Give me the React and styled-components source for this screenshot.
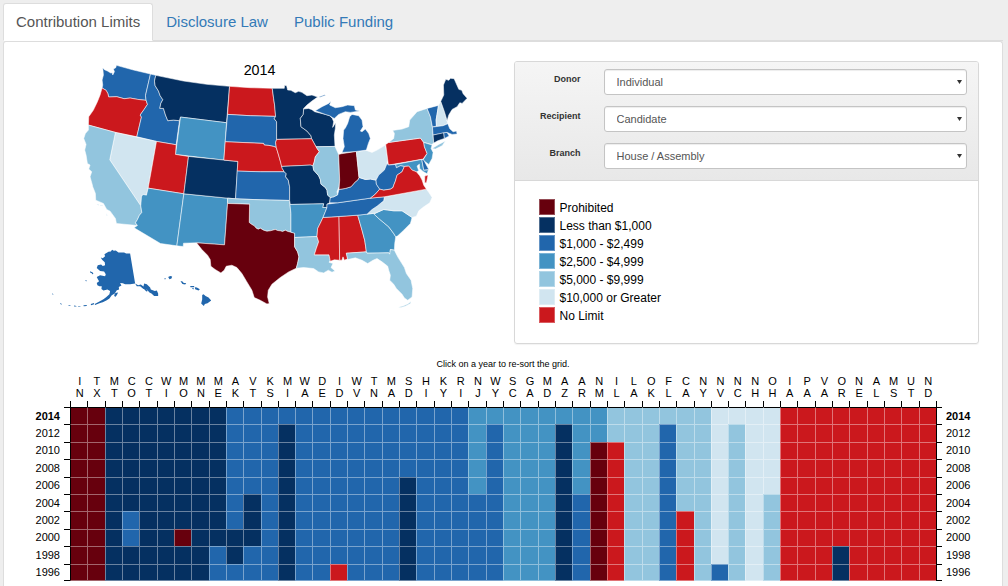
import React, { useState } from "react";
import styled, { createGlobalStyle } from "styled-components";

const GlobalStyle = createGlobalStyle`
  *, *::before, *::after { box-sizing: border-box; }
  body {
    margin: 0;
    background: #eee;
    color: #000;
    font-family: "Liberation Sans", Arial, sans-serif;
  }
`;

const LEVELS = {
  P: { color: "#67000d", label: "Prohibited" },
  A: { color: "#053061", label: "Less than $1,000" },
  B: { color: "#2166ac", label: "$1,000 - $2,499" },
  C: { color: "#4393c3", label: "$2,500 - $4,999" },
  D: { color: "#92c5de", label: "$5,000 - $9,999" },
  E: { color: "#d1e5f0", label: "$10,000 or Greater" },
  N: { color: "#cb181d", label: "No Limit" },
};

const YEARS = [2014, 2012, 2010, 2008, 2006, 2004, 2002, 2000, 1998, 1996];

// One letter per year, newest first; a single letter means it never changed.
const LIMITS = {
  IN: "P", TX: "P", MT: "A", CO: "AAAAAABBAA", CT: "A", WI: "A",
  MO: "AAAAAAAPAA", MN: "A", ME: "AAAAAAAABB", AK: "BBBBBBBAAB",
  VT: "BBBBBAAABB", KS: "B", MI: "BAAAAAAAAA", WA: "B", DE: "B",
  ID: "BBBBBBBBBN", WV: "B", TN: "B", MA: "B", SD: "BBBBAAAAAA",
  HI: "B", KY: "B", RI: "B", NJ: "CCCCCBBBBB", WY: "CBBBBBBBBB",
  SC: "C", GA: "C", MD: "C", AZ: "CAAAAAAAAA", AR: "CCCCCBBBBB",
  NM: "CCPPPPPPPP", IL: "DDNNNNNNNN", LA: "D", OK: "D",
  FL: "DBBBBBBBBB", CA: "DDDDDDNNNN", NY: "D", NV: "EEEEEEEEEB",
  NC: "EDDDDDDDDD", NH: "E", OH: "EEEEEDDDDD", IA: "N", PA: "N",
  VA: "N", OR: "NNNNNNNNAA", NE: "N", AL: "N", MS: "N", UT: "N", ND: "N",
};

const STATES = Object.keys(LIMITS);
const levelOf = (state, row) => LIMITS[state][row] || LIMITS[state][0];

const SHAPES = {
  WA: "M308,203 313,209 322,213 332,219 336,218 338,225 343,215 340,207 347,203 349,196 400,210 451,222 436,287 438,301 412,298 390,294 372,296 350,290 326,291 323,280 318,271 306,264 308,255 306,240 310,225Z",
  OR: "M306,264 318,271 323,280 326,291 350,290 372,296 390,294 412,298 438,301 442,313 432,328 420,345 424,351 410,410 346,397 265,375 266,350 280,330 292,305 300,285Z",
  ID: "M451,222 467,226 463,243 465,257 475,273 480,287 488,299 482,310 479,325 490,325 496,345 503,362 520,360 538,362 528,434 469,424 410,410 424,351 420,345 432,328 442,313 438,301 436,287Z",
  MT: "M467,226 550,243 620,253 688,259 679,368 541,351 538,362 520,360 503,362 496,345 490,325 479,325 482,310 488,299 480,287 475,273 465,257 463,243Z",
  WY: "M541,351 679,368 671,480 526,463Z",
  NV: "M346,397 469,424 444,564 439,585 428,583 424,590 422,617 329,479Z",
  UT: "M469,424 528,434 526,463 565,469 551,581 444,564Z",
  CA: "M265,375 346,397 329,479 422,617 425,637 418,645 412,658 406,668 412,676 349,670 346,655 330,633 320,628 310,610 287,600 286,580 278,560 277,555 270,530 275,515 266,507 270,495 262,490 258,465 254,450 258,433 251,415 256,400 265,390Z M290,612l6,1 1,2 -6,-1Z M300,615l8,0 0,2 -8,0Z M318,640l4,5 -2,1Z",
  AZ: "M444,564 551,581 530,737 481,730 402,683 412,676 406,668 412,658 418,645 425,637 422,617 424,590 428,583 439,585Z",
  NM: "M551,581 682,594 682,610 673,734 589,728 550,729 549,739 530,737Z",
  CO: "M565,469 671,480 713,484 706,596 682,594 551,581Z",
  ND: "M688,259 750,263 816,265 820,295 823,315 826,349 750,347 682,343Z",
  SD: "M682,343 750,347 826,349 822,356 829,365 829,418 826,427 828,442 820,439 806,436 792,435 790,430 675,425Z",
  NE: "M675,425 790,430 792,435 806,436 820,439 828,442 835,465 841,486 846,505 852,515 780,515 711,513 713,484 671,480Z",
  KS: "M711,513 780,515 852,515 858,521 856,530 864,540 868,560 868,601 780,599 706,596Z",
  OK: "M682,594 706,596 780,599 868,601 869,612 872,640 872,696 863,694 855,690 847,694 840,692 832,691 825,688 810,692 800,693 790,690 780,684 774,687 768,684 762,677 755,673 747,667 748,612 682,610Z",
  TX: "M682,610 748,612 747,667 755,673 762,677 768,684 774,687 780,684 790,690 800,693 810,692 825,688 832,691 840,692 847,694 855,690 863,694 872,696 883,699 883,740 892,755 896,770 892,790 888,804 865,815 840,832 815,852 804,870 802,890 807,910 800,911 780,900 762,892 755,870 740,845 725,820 710,802 695,795 678,798 672,810 662,818 645,808 632,798 630,778 622,765 605,748 589,728 673,734Z",
  MN: "M816,265 852,265 853,256 859,257 862,270 872,271 885,278 895,274 905,277 920,287 935,285 952,291 935,303 920,315 910,325 909,343 900,355 902,380 920,393 932,407 934,416 829,418 829,365 822,356 826,349 823,315 820,295Z",
  WI: "M910,327 925,325 935,329 943,335 975,343 988,347 996,355 1000,365 997,382 1006,368 1005,385 1002,405 1004,439 947,440 940,427 934,416 932,407 920,393 902,380 900,355 909,343Z",
  IA: "M829,418 934,416 940,427 947,440 957,455 945,470 942,485 938,497 930,495 844,499 841,486 835,465 828,442 826,427Z",
  MO: "M844,499 930,495 938,497 940,510 955,527 960,538 962,552 975,562 980,570 982,585 990,592 988,608 980,612 980,622 967,622 970,611 870,613 868,601 868,560 864,540 856,530 858,521 852,515 846,505Z",
  AR: "M869,613 970,611 967,622 980,622 975,635 968,652 962,665 952,685 950,709 883,712 883,699 872,696 872,640Z",
  LA: "M883,712 950,709 955,725 948,745 942,764 986,764 990,780 986,786 998,790 992,802 1004,812 995,816 984,810 970,818 955,815 940,805 910,802 888,804 892,790 896,770 892,755 883,740Z",
  MS: "M968,652 1016,649 1018,780 1002,779 990,783 986,764 942,764 948,745 955,725 950,709 952,685 962,665Z",
  AL: "M1016,649 1072,645 1085,690 1093,720 1096,740 1098,755 1038,759 1042,776 1032,780 1028,770 1025,780 1018,780Z",
  GA: "M1072,645 1125,639 1122,643 1135,655 1165,680 1180,700 1186,710 1183,730 1182,750 1170,748 1168,762 1165,758 1100,759 1098,755 1096,740 1093,720 1085,690Z",
  FL: "M1038,759 1098,755 1100,759 1165,758 1168,762 1170,748 1182,750 1192,770 1212,802 1218,820 1232,840 1237,865 1235,890 1222,900 1212,893 1205,882 1188,865 1180,852 1168,840 1170,825 1165,810 1162,798 1145,785 1130,775 1118,780 1102,790 1085,780 1065,773 1042,778Z M1194,921l14,-4 14,-6 10,-7 -2,6 -14,7 -14,5Z",
  SC: "M1125,639 1150,628 1180,632 1205,632 1235,652 1230,670 1210,690 1192,707 1186,710 1180,700 1165,680 1135,655 1122,643Z",
  NC: "M1100,642 1115,628 1130,618 1150,602 1152,590 1278,567 1286,578 1295,592 1288,608 1270,620 1255,632 1248,648 1235,652 1205,632 1180,632 1150,628 1125,639Z",
  TN: "M980,612 1012,608 1110,594 1152,590 1150,602 1130,618 1115,628 1100,642 1072,645 1016,649 968,652 975,635 980,622Z",
  KY: "M988,608 990,592 1000,590 1012,584 1016,568 1035,565 1052,560 1065,545 1072,540 1076,532 1095,538 1110,537 1127,540 1128,552 1138,567 1125,582 1110,594 1012,608Z",
  IL: "M947,440 1004,439 1015,463 1018,540 1016,560 1010,575 1012,584 1000,590 990,592 982,585 980,570 975,562 962,552 960,538 955,527 940,510 938,497 942,485 945,470 957,455Z",
  IN: "M1015,463 1023,461 1068,454 1076,532 1072,540 1065,545 1052,560 1035,565 1016,568 1018,540Z",
  OH: "M1068,454 1098,451 1115,457 1130,450 1155,435 1162,475 1160,492 1152,510 1135,525 1127,540 1110,537 1095,538 1076,532Z",
  MI: "M1025,457 1032,440 1028,415 1030,390 1035,384 1042,370 1048,350 1055,343 1075,347 1085,360 1088,380 1080,393 1085,395 1095,387 1105,400 1110,415 1104,430 1098,450 1068,454Z M945,332 965,320 985,310 992,303 988,315 1005,323 1025,320 1042,315 1062,317 1065,330 1078,333 1050,337 1035,335 1015,343 1002,355 996,352 988,347 975,343Z M955,291l18,-7 3,2 -16,6Z",
  PA: "M1156,433 1165,427 1260,414 1270,427 1272,440 1280,460 1268,477 1164,495Z",
  NY: "M1165,427 1180,415 1182,400 1177,391 1205,387 1225,380 1228,360 1250,335 1280,325 1290,350 1296,381 1298,405 1300,429 1294,433 1270,427 1260,414Z M1295,445 1315,433 1335,423 1325,437 1305,447Z",
  NJ: "M1270,427 1295,435 1292,445 1298,457 1295,475 1285,493 1268,480 1280,460 1272,440Z",
  MD: "M1185,493 1264,478 1270,510 1284,509 1280,521 1268,514 1258,505 1257,492 1250,498 1255,512 1248,515 1235,510 1225,498 1212,499 1200,497 1188,503Z",
  DE: "M1264,478 1270,480 1285,508 1270,510Z",
  WV: "M1160,490 1164,495 1185,493 1188,503 1200,497 1212,499 1205,515 1190,525 1185,543 1180,555 1178,562 1170,567 1150,570 1138,567 1128,552 1127,540 1135,525 1152,510Z",
  VA: "M1212,499 1225,498 1235,510 1248,515 1258,527 1265,540 1270,555 1278,567 1152,590 1110,594 1125,582 1138,567 1150,570 1170,567 1178,562 1180,555 1185,543 1190,525 1205,515Z M1273,528 1283,525 1278,548 1273,548Z",
  VT: "M1280,325 1314,316 1312,330 1307,360 1308,378 1296,381 1290,350Z",
  NH: "M1314,316 1321,304 1332,335 1342,370 1328,377 1308,379 1307,360 1312,330Z",
  ME: "M1321,304 1330,285 1329,255 1336,238 1345,241 1350,235 1361,236 1375,268 1384,271 1388,281 1400,295 1385,310 1378,308 1370,320 1355,328 1345,345 1340,362 1332,335Z",
  MA: "M1296,381 1328,377 1342,371 1348,386 1358,395 1368,393 1370,402 1355,403 1340,397 1298,405Z",
  CT: "M1298,405 1330,398 1332,415 1312,422 1300,429Z",
  RI: "M1330,398 1340,397 1346,408 1332,415Z",
  AK: "M302,772 308,774 315,768 313,762 325,755 332,754 336,749 341,752 347,751 355,757 372,757 378,760 390,760 405,850 390,852 375,852 368,849 360,848 364,856 356,860 357,868 350,870 344,880 335,885 328,895 320,900 308,906 300,908 285,914 284,911 298,904 310,897 318,891 328,882 330,872 322,868 310,871 304,866 305,858 298,858 292,855 290,848 297,843 293,836 290,830 300,825 315,828 317,822 312,814 300,812 295,808 290,803 293,795 303,793 308,797 315,795 314,786 306,779Z M405,850 414,855 422,853 430,859 432,850 440,852 450,862 452,868 464,872 470,871 474,880 474,887 462,887 454,880 448,877 440,868 430,866 420,858 410,858Z M433,862l10,10 -4,2 -8,-8Z M342,885 346,878 354,877 350,885 345,890Z M270,813l8,4 2,4 -3,1 -2,-3 -5,-2Z M272,911l10,-3 0,4 -9,3Z M250,915l10,-1 0,3 -9,1Z M234,917l7,0 0,2 -7,0Z M222,916l7,1 0,2 -7,0Z M205,914l6,1 0,2 -6,-1Z M180,909l6,2 0,2 -6,-2Z M156,880l4,1 0,2 -4,-1Z M256,840l4,1 0,2 -4,-1Z",
  HI: "M504,830 510,827 516,829 514,835 508,837Z M493,834l4,0 -1,3 -3,0Z M541,843 546,843 551,848 558,848 555,853 547,851Z M570,857l12,0 0,4 -11,0Z M576,864l5,0 0,3 -5,-1Z M584,861l6,1 9,5 -4,4 -10,-4Z M606,884 610,882 616,887 625,892 633,901 622,909 614,911 611,917 603,910 606,898Z",
};

// Island chains are too fine to carry an outline.
const ISLAND_STATES = ["AK", "HI"];

const Page = styled.div`
  display: flex;
  flex-direction: column;
  min-height: 100vh;
  padding: 3px 5px 0 3px;
`;

const Tabs = styled.nav`
  display: flex;
  border-bottom: 1px solid #ddd;
`;

const Tab = styled.a`
  margin-bottom: -1px;
  padding: 8px 12px 9px;
  border: 1px solid ${(p) => (p.$active ? "#ddd" : "transparent")};
  border-bottom-color: ${(p) => (p.$active ? "#fff" : "transparent")};
  border-radius: 3px 3px 0 0;
  background: ${(p) => (p.$active ? "#fff" : "transparent")};
  color: ${(p) => (p.$active ? "#555" : "#337ab7")};
  font-size: 15px;
  line-height: 19px;
  text-decoration: none;
`;

const Panel = styled.main`
  flex: 1;
  padding-bottom: 4px;
  border: 1px solid #ddd;
  border-bottom: 0;
  border-radius: 3px 3px 0 0;
  background: #fff;
`;

const Overview = styled.section`
  display: grid;
  grid-template-columns: minmax(0, 1fr) minmax(0, 1fr);
  gap: 20px;
  align-items: start;
  padding: 19px 23px 0 24px;
`;

const MapDrawing = styled.svg`
  display: block;
  width: 100%;
  height: auto;

  text {
    font-size: 43px;
    text-anchor: middle;
  }
`;

const StateShape = styled.path`
  stroke: ${(p) => (p.$outlined ? "rgba(255, 255, 255, 0.8)" : "none")};
  stroke-width: 2px;
  stroke-linejoin: round;
`;

const Card = styled.div`
  overflow: hidden;
  border: 1px solid #d8d8d8;
  border-radius: 3px;
  box-shadow: 0 1px 1px rgba(0, 0, 0, 0.05);
`;

const Filters = styled.form`
  display: grid;
  gap: 11px;
  padding: 7px 11px 11px 0;
  border-bottom: 1px solid #d8d8d8;
  background: linear-gradient(#f5f5f5, #e8e8e8);
`;

const Field = styled.div`
  display: grid;
  grid-template-columns: 66px minmax(0, 1fr);
  gap: 23px;
`;

const FieldLabel = styled.label`
  padding-top: 4px;
  color: #333;
  font-size: 9px;
  font-weight: bold;
  line-height: 12px;
  text-align: right;
`;

const SelectBox = styled.div`
  position: relative;
`;

const Select = styled.select`
  display: block;
  width: 100%;
  height: 26px;
  padding: 0 12px;
  border: 1px solid #c4c4c4;
  border-radius: 3px;
  background: #fff;
  box-shadow: inset 0 1px 1px rgba(0, 0, 0, 0.075);
  color: #555;
  font: 11px "Liberation Sans", Arial, sans-serif;
  appearance: none;
`;

const Caret = styled.svg`
  position: absolute;
  top: 11px;
  right: 5px;
  width: 5px;
  height: 4px;
  fill: #333;
  pointer-events: none;
`;

const Legend = styled.ul`
  display: grid;
  gap: 2px;
  margin: 0;
  padding: 18px 24px 20px;
  list-style: none;
`;

const LegendItem = styled.li`
  display: flex;
  gap: 5px;
  height: 16px;
  font-size: 12px;
  line-height: 18px;
`;

const Swatch = styled.span`
  width: 16px;
  height: 16px;
  border: 1px solid rgba(255, 255, 255, 0.3);
  background: ${(p) => p.$color};
`;

const History = styled.table`
  display: block;
  margin-top: 13px;
`;

const Caption = styled.caption`
  display: block;
  font-size: 9px;
  line-height: 14px;
`;

const Head = styled.thead`
  display: block;
  padding-top: 4px;
`;

const Body = styled.tbody`
  display: grid;
  grid-template-rows: repeat(10, minmax(0, 1fr));
  height: 174px;
`;

const Row = styled.tr`
  display: grid;
  grid-template-columns: 66px repeat(50, minmax(0, 1fr)) 66px;
`;

const StateHead = styled.th`
  display: flex;
  flex-direction: column;
  padding: 0;
  font-size: 11px;
  font-weight: normal;
  line-height: 12px;
  text-align: center;

  &::after {
    content: "";
    height: 6px;
    margin-top: 2px;
    border-left: 1px solid #000;
  }
`;

const Letter = styled.span`
  display: block;
  padding-left: 2px;
`;

const YearHead = styled.th`
  display: flex;
  flex-direction: ${(p) => (p.$side === "left" ? "row" : "row-reverse")};
  justify-content: flex-end;
  gap: 4px;
  padding: 0;

  &::after {
    content: "";
    width: 6px;
    border-top: 1px solid #000;
    border-bottom: ${(p) => (p.$last ? "1px solid #000" : "0")};
    border-left: ${(p) => (p.$side === "right" ? "1px solid #000" : "0")};
  }
`;

const YearButton = styled.button`
  padding: 0;
  border: 0;
  background: none;
  color: #000;
  cursor: pointer;
  font: ${(p) => (p.$active ? "bold" : "normal")} 11px "Liberation Sans", Arial, sans-serif;
`;

const Cell = styled.td`
  padding: 0;
  border-top: 1px solid ${(p) => (p.$first ? "#000" : "rgba(255, 255, 255, 0.4)")};
  border-left: 1px solid rgba(255, 255, 255, 0.4);
  border-bottom: ${(p) => (p.$last ? "1px solid rgba(255, 255, 255, 0.4)" : "0")};
  background: ${(p) => p.$color};

  th + & {
    border-left-color: #000;
  }
`;

const FIELDS = [
  { id: "donor", label: "Donor", options: ["Individual", "Corporation", "Union", "PAC"] },
  { id: "recipient", label: "Recipient", options: ["Candidate", "Party", "PAC"] },
  { id: "branch", label: "Branch", options: ["House / Assembly", "Senate", "Governor"] },
];

function StateMap({ row }) {
  return (
    <MapDrawing viewBox="84 183 1395 780" role="img" aria-label="Contribution limits by state">
      {Object.entries(SHAPES).map(([state, d]) => (
        <StateShape
          key={state}
          d={d}
          fill={LEVELS[levelOf(state, row)].color}
          $outlined={!ISLAND_STATES.includes(state)}
        />
      ))}
      <text x="778" y="225">{YEARS[row]}</text>
    </MapDrawing>
  );
}

function HistoryGrid({ row, order, onPick }) {
  const year = (index, side) => (
    <YearHead $side={side} $last={index === YEARS.length - 1} scope="row">
      <YearButton type="button" $active={index === row} onClick={() => onPick(index)}>
        {YEARS[index]}
      </YearButton>
    </YearHead>
  );
  return (
    <History>
      <Caption>Click on a year to re-sort the grid.</Caption>
      <Head>
        <Row>
          <td />
          {order.map((state) => (
            <StateHead key={state} scope="col" abbr={state}>
              <Letter>{state[0]}</Letter>
              <Letter>{state[1]}</Letter>
            </StateHead>
          ))}
          <StateHead as="td">
            <Letter>&nbsp;</Letter>
            <Letter>&nbsp;</Letter>
          </StateHead>
        </Row>
      </Head>
      <Body>
        {YEARS.map((y, index) => (
          <Row key={y}>
            {year(index, "left")}
            {order.map((state) => (
              <Cell
                key={state}
                $color={LEVELS[levelOf(state, index)].color}
                $first={index === 0}
                $last={index === YEARS.length - 1}
              />
            ))}
            {year(index, "right")}
          </Row>
        ))}
      </Body>
    </History>
  );
}

export default function App() {
  const [row, setRow] = useState(0);
  const [order, setOrder] = useState(STATES);

  const pickYear = (index) => {
    const rank = Object.keys(LEVELS);
    setRow(index);
    setOrder(
      [...STATES].sort(
        (a, b) => rank.indexOf(levelOf(a, index)) - rank.indexOf(levelOf(b, index))
      )
    );
  };

  return (
    <Page>
      <GlobalStyle />
      <Tabs>
        <Tab href="#limits" $active aria-current="page">Contribution Limits</Tab>
        <Tab href="#disclosure">Disclosure Law</Tab>
        <Tab href="#funding">Public Funding</Tab>
      </Tabs>
      <Panel>
        <Overview>
          <StateMap row={row} />
          <Card>
            <Filters>
              {FIELDS.map((field) => (
                <Field key={field.id}>
                  <FieldLabel htmlFor={field.id}>{field.label}</FieldLabel>
                  <SelectBox>
                    <Select id={field.id}>
                      {field.options.map((option) => (
                        <option key={option}>{option}</option>
                      ))}
                    </Select>
                    <Caret viewBox="0 0 10 8" aria-hidden="true">
                      <path d="M0 0H10L5 8Z" />
                    </Caret>
                  </SelectBox>
                </Field>
              ))}
            </Filters>
            <Legend>
              {Object.values(LEVELS).map((level) => (
                <LegendItem key={level.label}>
                  <Swatch $color={level.color} />
                  {level.label}
                </LegendItem>
              ))}
            </Legend>
          </Card>
        </Overview>
        <HistoryGrid row={row} order={order} onPick={pickYear} />
      </Panel>
    </Page>
  );
}
